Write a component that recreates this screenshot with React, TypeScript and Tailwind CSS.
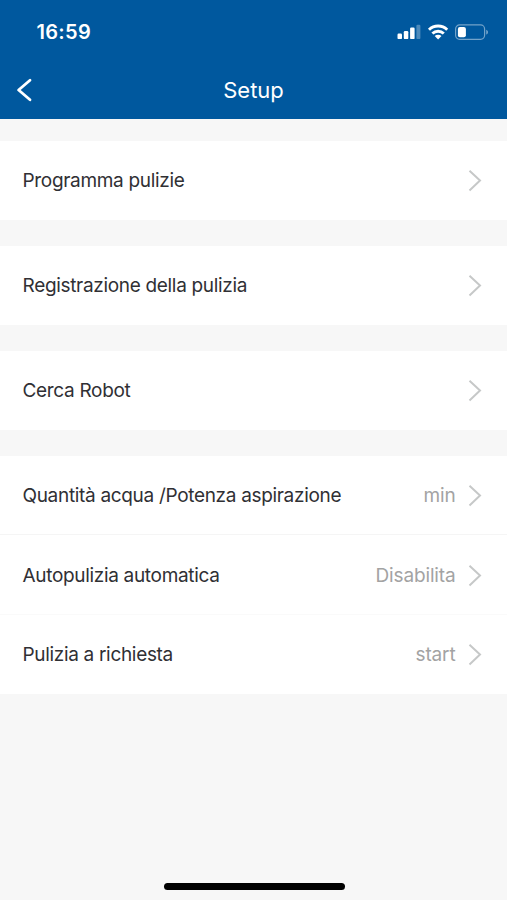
import { clsx } from "clsx";

interface SettingRow {
  label: string;
  value?: string;
  rowClass: string;
}

const groups: SettingRow[][] = [
  [{ label: "Programma pulizie", rowClass: "h-[79px]" }],
  [{ label: "Registrazione della pulizia", rowClass: "h-[79px]" }],
  [{ label: "Cerca Robot", rowClass: "h-[79px]" }],
  [
    {
      label: "Quantità acqua /Potenza aspirazione",
      value: "min",
      rowClass: "h-[79px] border-b border-[#f5f5f5] pt-px",
    },
    {
      label: "Autopulizia automatica",
      value: "Disabilita",
      rowClass: "h-20 border-b border-[#fafafa] pt-0.5",
    },
    {
      label: "Pulizia a richiesta",
      value: "start",
      rowClass: "h-[79px]",
    },
  ],
];

function StatusIcons() {
  return (
    <svg width="92" height="18" viewBox="0 0 92 18" fill="none">
      {/* Signal */}
      <g fill="#fff">
        <rect x="0.5" y="10.5" width="4.5" height="5.6" rx="1.2" />
        <rect x="6.8" y="8" width="4.5" height="8.1" rx="1.2" />
        <rect x="13.1" y="4.6" width="4.5" height="11.5" rx="1.2" />
        <rect x="19.4" y="1.8" width="4" height="14.3" rx="1.2" opacity="0.3" />
      </g>
      {/* Wifi */}
      <g stroke="#fff" strokeWidth="2.9">
        <path d="M32 6.7a13 13 0 0 1 18.2 0" />
        <path d="M35.4 10.5a8.3 8.3 0 0 1 11.4 0" />
      </g>
      <path d="M41.1 16.5l-3.4-3.4a4.8 4.8 0 0 1 6.8 0z" fill="#fff" />
      {/* Battery */}
      <rect
        x="58.6"
        y="1.9"
        width="29"
        height="14.4"
        rx="4"
        stroke="#fff"
        strokeOpacity="0.45"
        strokeWidth="1.2"
      />
      <rect x="60.9" y="4" width="8" height="10.2" rx="2" fill="#fff" />
      <path d="M89.3 6.8v4.8c1-.4 1.6-1.3 1.6-2.4s-.6-2-1.6-2.4z" fill="#fff" fillOpacity="0.5" />
    </svg>
  );
}

function Row({ row }: { row: SettingRow }) {
  return (
    <div
      className={clsx(
        "flex items-center bg-white pl-[22.5px] pr-[25px] text-[19px] leading-6",
        row.rowClass,
      )}
    >
      <span className="tracking-[-0.32px] text-[#303034]">{row.label}</span>
      {row.value && (
        <span className="ml-auto mr-[12.5px] tracking-[-0.15px] text-[#a3a3a3]">
          {row.value}
        </span>
      )}
      <svg
        width="14"
        height="23"
        viewBox="0 0 14 23"
        fill="none"
        className={row.value ? "" : "ml-auto"}
      >
        <path d="M1.5 1.8L12 11.6L1.5 21.4" stroke="#c6c8c8" strokeWidth="2" />
      </svg>
    </div>
  );
}

export default function App() {
  return (
    <div className="flex h-[900px] w-[507px] flex-col bg-[#f7f7f7] font-['Inter','Liberation_Sans',sans-serif]">
      <header className="h-[119px] bg-[#00589e] text-white">
        {/* Status bar */}
        <div className="flex h-16 items-center justify-between pl-[36.5px] pr-[18px]">
          <span className="text-[20px] font-semibold tracking-[0.3px]">16:59</span>
          <StatusIcons />
        </div>
        {/* Title bar */}
        <div className="grid h-[52px] grid-cols-3 items-center">
          <svg width="16" height="24" viewBox="0 0 16 24" fill="none" className="ml-4">
            <path
              d="M14 2.2L2.6 12L14 21.8"
              stroke="#fff"
              strokeWidth="2.8"
              strokeLinecap="round"
              strokeLinejoin="round"
            />
          </svg>
          <h1 className="text-center text-[22px]">Setup</h1>
        </div>
      </header>

      {/* Settings */}
      <main className="flex flex-col gap-[26px] pt-[22px]">
        {groups.map(group => (
          <section key={group[0].label}>
            {group.map(row => (
              <Row key={row.label} row={row} />
            ))}
          </section>
        ))}
      </main>

      {/* Home indicator */}
      <div className="mb-[10px] ml-[164px] mt-auto h-[7px] w-[181px] rounded-full bg-black" />
    </div>
  );
}
